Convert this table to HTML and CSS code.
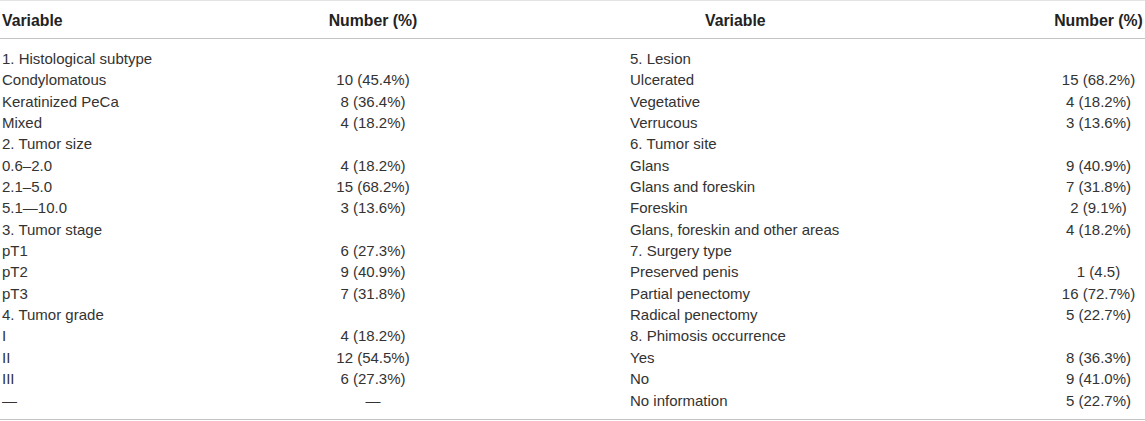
FILE: index.html
```html
<!DOCTYPE html>
<html>
<head>
<meta charset="utf-8">
<link rel="stylesheet" href="styles.css">
</head>
<body>
<div class="table">
  <div class="row head">
    <div class="c1">Variable</div>
    <div class="c2">Number (%)</div>
    <div class="c3 h3">Variable</div>
    <div class="c4">Number (%)</div>
  </div>
  <div class="body">
    <div class="row"><div class="c1">1. Histological subtype</div><div class="c2"></div><div class="c3">5. Lesion</div><div class="c4"></div></div>
    <div class="row"><div class="c1">Condylomatous</div><div class="c2">10 (45.4%)</div><div class="c3">Ulcerated</div><div class="c4">15 (68.2%)</div></div>
    <div class="row"><div class="c1">Keratinized PeCa</div><div class="c2">8 (36.4%)</div><div class="c3">Vegetative</div><div class="c4">4 (18.2%)</div></div>
    <div class="row"><div class="c1">Mixed</div><div class="c2">4 (18.2%)</div><div class="c3">Verrucous</div><div class="c4">3 (13.6%)</div></div>
    <div class="row"><div class="c1">2. Tumor size</div><div class="c2"></div><div class="c3">6. Tumor site</div><div class="c4"></div></div>
    <div class="row"><div class="c1">0.6–2.0</div><div class="c2">4 (18.2%)</div><div class="c3">Glans</div><div class="c4">9 (40.9%)</div></div>
    <div class="row"><div class="c1">2.1–5.0</div><div class="c2">15 (68.2%)</div><div class="c3">Glans and foreskin</div><div class="c4">7 (31.8%)</div></div>
    <div class="row"><div class="c1">5.1—10.0</div><div class="c2">3 (13.6%)</div><div class="c3">Foreskin</div><div class="c4">2 (9.1%)</div></div>
    <div class="row"><div class="c1">3. Tumor stage</div><div class="c2"></div><div class="c3">Glans, foreskin and other areas</div><div class="c4">4 (18.2%)</div></div>
    <div class="row"><div class="c1">pT1</div><div class="c2">6 (27.3%)</div><div class="c3">7. Surgery type</div><div class="c4"></div></div>
    <div class="row"><div class="c1">pT2</div><div class="c2">9 (40.9%)</div><div class="c3">Preserved penis</div><div class="c4">1 (4.5)</div></div>
    <div class="row"><div class="c1">pT3</div><div class="c2">7 (31.8%)</div><div class="c3">Partial penectomy</div><div class="c4">16 (72.7%)</div></div>
    <div class="row"><div class="c1">4. Tumor grade</div><div class="c2"></div><div class="c3">Radical penectomy</div><div class="c4">5 (22.7%)</div></div>
    <div class="row"><div class="c1">I</div><div class="c2">4 (18.2%)</div><div class="c3">8. Phimosis occurrence</div><div class="c4"></div></div>
    <div class="row"><div class="c1">II</div><div class="c2">12 (54.5%)</div><div class="c3">Yes</div><div class="c4">8 (36.3%)</div></div>
    <div class="row"><div class="c1">III</div><div class="c2">6 (27.3%)</div><div class="c3">No</div><div class="c4">9 (41.0%)</div></div>
    <div class="row"><div class="c1">—</div><div class="c2">—</div><div class="c3">No information</div><div class="c4">5 (22.7%)</div></div>
  </div>
</div>
</body>
</html>
```

FILE: styles.css
```css
html, body {
  margin: 0;
  padding: 0;
  background: #ffffff;
}
body {
  font-family: "Liberation Sans", Arial, Helvetica, sans-serif;
  font-size: 15px;
  color: #333333;
}
.table {
  width: 1145px;
  border-top: 1px solid #e4e4e4;
  border-bottom: 1px solid #c4c4c4;
}
.row {
  display: grid;
  grid-template-columns: 328px 90px 634px 93px;
  line-height: 21.35px;
  white-space: nowrap;
}
.head {
  height: 37px;
  align-items: center;
  font-size: 15.8px;
  font-weight: bold;
  color: #222222;
  border-bottom: 1px solid #c4c4c4;
}
.head > div {
  padding-top: 2px;
}
.body {
  padding: 9px 0 8px;
}
.c1 {
  padding-left: 2px;
}
.c2, .c4 {
  text-align: center;
}
.c3 {
  padding-left: 212px;
}
.head .h3 {
  padding-left: 287px;
}
```
